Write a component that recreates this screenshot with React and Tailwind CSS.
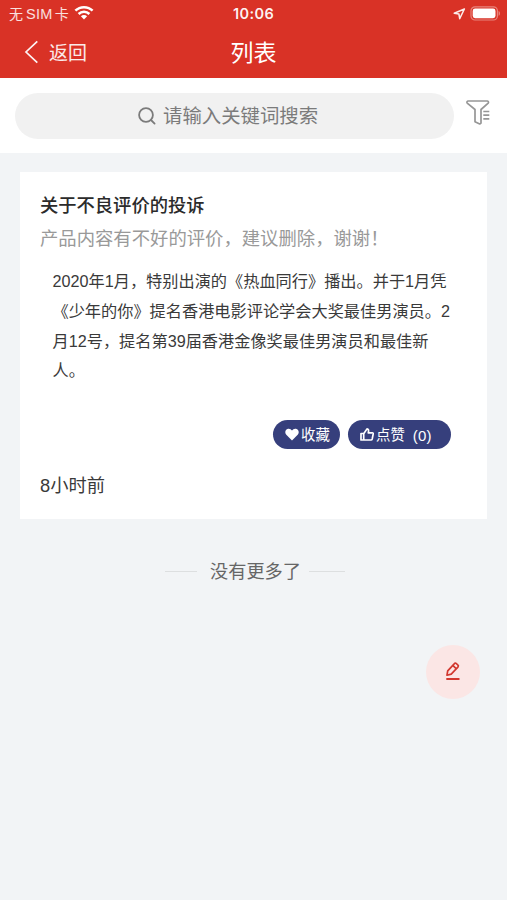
import React from 'react';

const lines = [
  '2020年1月，特别出演的《热血同行》播出。并于1月凭',
  '《少年的你》提名香港电影评论学会大奖最佳男演员。2',
  '月12号，提名第39届香港金像奖最佳男演员和最佳新',
  '人。',
];

const WifiIcon = () => (
  <svg width="20" height="15" viewBox="0 0 20 15" fill="none" stroke="currentColor" strokeWidth="2.5">
    <path d="M1.4 5.7a12.2 12.2 0 0 1 17.2 0" />
    <path d="M4.6 9a7.7 7.7 0 0 1 10.8 0" />
    <path d="M10 14.4 6.9 11.2a4.4 4.4 0 0 1 6.2 0Z" fill="currentColor" stroke="none" />
  </svg>
);

const StatusBar = () => (
  <div className="flex h-[28px] items-center justify-between pl-[9px] pr-[6px]">
    <div className="flex w-[100px] items-center text-[14px] leading-none text-white/85">
      <span>无</span>
      <span className="ml-[3px] text-[14.5px] tracking-[0.3px]">SIM</span>
      <span className="ml-[2px]">卡</span>
      <span className="ml-[5px] -mt-[3px] text-white"><WifiIcon /></span>
    </div>
    <span className="-ml-[3px] font-['Inter','Liberation_Sans',sans-serif] text-[14.5px] font-semibold leading-none tracking-[0.4px] text-white/95">10:06</span>
    <div className="-mt-[1px] flex w-[100px] items-center justify-end">
      <svg width="13" height="12" viewBox="0 0 13 12" fill="none" stroke="#fff" strokeOpacity=".9" strokeWidth="1.5" strokeLinejoin="round">
        <path d="M11.4 1 1.2 5.2l4.7.8.8 4.7Z" />
      </svg>
      <svg className="ml-[4px]" width="31" height="15" viewBox="0 0 31 15">
        <rect x="1" y=".8" width="26.4" height="13.2" rx="4" fill="none" stroke="#fff" strokeOpacity=".4" strokeWidth="1.2" />
        <rect x="2.7" y="2.6" width="22.8" height="9.6" rx="2.4" fill="#fff" />
        <path d="M28.6 5c1.7.6 1.7 4.2 0 4.8Z" fill="#fff" fillOpacity=".45" />
      </svg>
    </div>
  </div>
);

const Header = () => (
  <header className="h-[78px] bg-[#d93226] text-white">
    <StatusBar />
    <div className="grid h-[50px] grid-cols-3 items-center">
      <div className="flex items-center pl-[24px]">
        <svg className="-mt-[2px]" width="15" height="24" viewBox="0 0 15 24" fill="none" stroke="#fff" strokeOpacity=".95" strokeWidth="1.7">
          <path d="M13.3 1.3 2 12l11.3 10.7" />
        </svg>
        <span className="ml-[10px] text-[19px] leading-none text-white/90">返回</span>
      </div>
      <h1 className="pt-[1px] text-center text-[23px] leading-none">列表</h1>
    </div>
  </header>
);

const SearchBar = () => (
  <div className="flex h-[75px] items-center bg-white pl-[15px]">
    <div className="flex h-[46px] w-[439px] items-center rounded-full bg-[#f1f1f1] pl-[122px] text-[#7b7b7b]">
      <svg width="20" height="20" viewBox="0 0 20 20" fill="none" stroke="currentColor" strokeWidth="1.8">
        <circle cx="9" cy="9" r="6.9" />
        <path d="m14 14 3.6 3.6" strokeLinecap="round" />
      </svg>
      <span className="ml-[6px] pt-[2px] text-[19.4px] leading-none">请输入关键词搜索</span>
    </div>
    <svg className="-mt-[7px] ml-[11px]" width="27" height="27" viewBox="0 0 27 27" fill="none" stroke="#969696" strokeWidth="1.7" strokeLinejoin="round">
      <path d="M3.3 2H22a1.3 1.3 0 0 1 1.2 2.1l-7.200 6.400v13.500l-1.300 1-4.700-2.200V10.500L2.200 4.1A1.3 1.3 0 0 1 3.300 2Z" />
      <path d="M18.300 12.500h6M18.300 16.200h6M18.300 19.900h6" />
    </svg>
  </div>
);

const PostCard = () => (
  <article className="mx-[20px] mt-[19px] h-[347px] bg-white pt-[21px]">
    <h2 className="pl-[20px] text-[18.3px] font-medium leading-[26px] text-[#2b2b2b]">关于不良评价的投诉</h2>
    <p className="mt-[7px] pl-[20px] text-[18.35px] leading-[26px] text-[#999]">产品内容有不好的评价，建议删除，谢谢！</p>
    <div className="mt-[15px] pl-[32.5px] text-[16.2px] leading-[29.8px] text-[#3a3a3a]">
      {lines.map((line) => (
        <p key={line} className="whitespace-nowrap">{line}</p>
      ))}
    </div>
    <div className="mt-[34px] flex h-[29px] gap-[8px] pl-[253px] text-[14.4px] leading-none text-white">
      <button className="flex w-[67px] items-center rounded-full bg-[#363f7c] pl-[12px]">
        <svg width="14" height="13" viewBox="0 0 14 13" fill="currentColor">
          <path d="M7 12.4 1.3 6.8C-.5 4.9.2 1.8 2.4.9 4.2.2 6.1 1 7 2.6 7.9 1 9.8.2 11.6.9c2.2.9 2.9 4 1.1 5.9Z" />
        </svg>
        <span className="ml-[2px] pt-[2px]">收藏</span>
      </button>
      <button className="flex w-[103px] items-center rounded-full bg-[#363f7c] pl-[12px]">
        <svg width="14" height="13" viewBox="0 0 14 13" fill="none" stroke="currentColor" strokeWidth="1.7" strokeLinejoin="round">
          <path d="M1 5.5h2.700V12H1ZM3.700 5.800 7 .9c1.400.2 1.900 1.200 1.300 3.900h4.100c.7 0 .9.5.8 1.100L12.200 11c-.2.7-.6 1-1.200 1H3.700" />
        </svg>
        <span className="ml-[2px] pt-[2px]">点赞</span>
        <span className="ml-[8px] pt-[1px] text-[15px] tracking-[0.2px]">(0)</span>
      </button>
    </div>
    <p className="mt-[24px] pl-[20px] text-[18.3px] leading-[26px] text-[#3a3a3a]">8小时前</p>
  </article>
);

const App = () => (
  <div className="relative h-[900px] w-[507px] overflow-hidden bg-[#f2f4f6] font-['Liberation_Sans','Noto_Sans_CJK_SC',sans-serif] [text-spacing-trim:space-all]">
    <Header />
    <SearchBar />
    <PostCard />
    <div className="mt-[40px] flex items-center justify-center pl-[3px] text-[18.2px] leading-[26px] text-[#666]">
      <span className="-mt-[2px] h-px w-[32px] bg-[#dddfe0]" />
      <span className="ml-[13px] mr-[8px]">没有更多了</span>
      <span className="-mt-[2px] h-px w-[36px] bg-[#dddfe0]" />
    </div>
    <button className="absolute left-[426px] top-[645px] flex h-[54px] w-[54px] items-center justify-center rounded-full bg-[#fbe6e5]">
      <svg className="-mt-[3px]" width="18" height="20" viewBox="0 0 18 20" fill="none" stroke="#d2382f" strokeWidth="1.7" strokeLinejoin="round">
        <path d="m3 14.200.7-4.400L10.200 2.800c.6-.7 1.500-.7 2.200-.1l1.400 1.300c.7.600.7 1.500.1 2.200l-6.700 6.900ZM8.800 4.400l3.600 3.500" />
        <path d="M2.300 18h13.200" strokeWidth="2" />
      </svg>
    </button>
  </div>
);

export default App;
